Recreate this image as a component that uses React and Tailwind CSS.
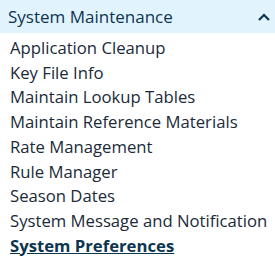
import React from "react";

const items = [
  "Application Cleanup",
  "Key File Info",
  "Maintain Lookup Tables",
  "Maintain Reference Materials",
  "Rate Management",
  "Rule Manager",
  "Season Dates",
  "System Message and Notification",
  "System Preferences",
];

const App = () => {
  const active = "System Preferences";

  return (
    <div className="w-[275px] h-[258px] bg-white font-['Open_Sans',sans-serif] overflow-hidden">
      <div className="flex items-center justify-between h-[33px] bg-[#e1f3fc] pl-[8px] pr-[5px]">
        <span className="text-[17px] text-[#0d3550]">System Maintenance</span>
        <svg width="12" height="8" viewBox="0 0 12 8" fill="none">
          <path d="M1 7 L6 2 L11 7" stroke="#0d3550" strokeWidth="2.2" />
        </svg>
      </div>
      <ul className="pl-[10px] pt-[3px]">
        {items.map((item) => (
          <li
            key={item}
            className={
              item === active
                ? "text-[16.7px] leading-[24.7px] font-bold underline text-[#0d3550]"
                : "text-[16.7px] leading-[24.7px] text-[#1b2a38]"
            }
          >
            {item}
          </li>
        ))}
      </ul>
    </div>
  );
};

export default App;
